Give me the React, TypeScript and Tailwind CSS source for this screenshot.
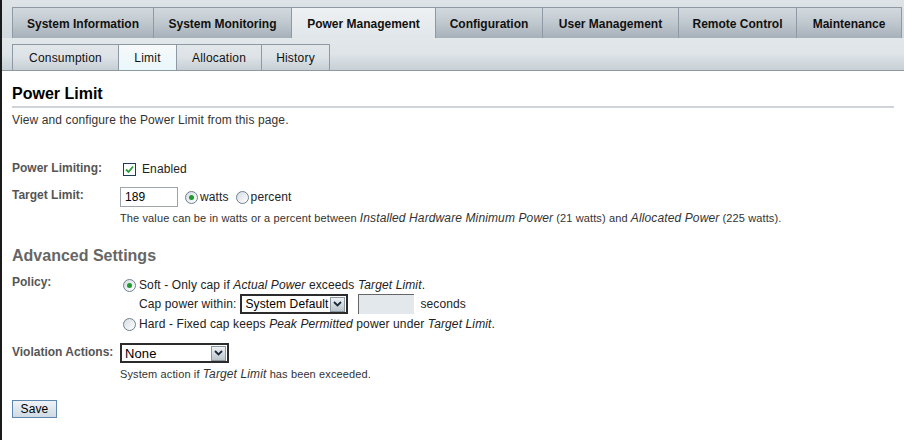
import React from "react";

const topTabs = [
  { label: "System Information", w: 142 },
  { label: "System Monitoring", w: 138 },
  { label: "Power Management", w: 144, active: true },
  { label: "Configuration", w: 107 },
  { label: "User Management", w: 136 },
  { label: "Remote Control", w: 118 },
  { label: "Maintenance", w: 105 },
];

const subTabs = [
  { label: "Consumption", w: 107 },
  { label: "Limit", w: 58, active: true },
  { label: "Allocation", w: 85 },
  { label: "History", w: 68 },
];

function Radio({ checked }: { checked?: boolean }) {
  return (
    <span className="relative inline-flex h-[13px] w-[13px] shrink-0 items-center justify-center rounded-full border border-[#6f7f8e] bg-linear-to-br from-[#d5dde4] to-white">
      {checked && <span className="h-[5px] w-[5px] rounded-full bg-[#1f9a2c]" />}
    </span>
  );
}

function Checkbox() {
  return (
    <span className="inline-flex h-[13px] w-[13px] shrink-0 items-center justify-center border border-[#1c3c5a] bg-white">
      <svg width="9" height="9" viewBox="0 0 9 9">
        <path d="M1 4.5 L3.5 7 L8 1.5" fill="none" stroke="#21a12f" strokeWidth="1.8" />
      </svg>
    </span>
  );
}

function SelectBox({ value, w, size }: { value: string; w: number; size: string }) {
  return (
    <span
      className={`inline-flex h-[20px] items-center justify-between whitespace-nowrap border-2 border-[#2b2b2b] bg-white pl-[3px] pr-[1px] text-black ${size}`}
      style={{ width: w }}
    >
      <span className="leading-none">{value}</span>
      <span className="inline-flex h-[15px] w-[15px] shrink-0 items-center justify-center border border-[#8a96a0] bg-linear-to-b from-[#eef1f3] to-[#bcc5cc]">
        <svg width="9" height="6" viewBox="0 0 9 6">
          <path d="M1 1 L4.5 4.5 L8 1" fill="none" stroke="#1a2a3a" strokeWidth="1.8" />
        </svg>
      </span>
    </span>
  );
}

export default function App() {
  return (
    <div
      className="relative h-[440px] w-[904px] overflow-hidden border-l-2 border-[#1a1a1a] bg-white text-[12px] tracking-[0.12px] text-[#333]"
      style={{ fontFamily: '"Liberation Sans", Arial, sans-serif' }}
    >
      {/* top tab bar */}
      <div className="flex h-[38px] items-end bg-linear-to-b from-[#dde3e7] to-[#d2d9de] pl-[10px]">
        {topTabs.map((t, i) => (
          <div
            key={t.label}
            className={`flex h-[31px] shrink-0 items-center justify-center border-t border-r border-[#8e99a3] pt-[1px] text-[12px] font-bold tracking-normal text-[#111] ${
              i === 0 ? "border-l" : ""
            } ${
              t.active
                ? "bg-linear-to-b from-[#eef1f3] to-[#e0e6ea]"
                : "bg-linear-to-b from-[#d2d9de] via-[#c0c8cf] to-[#a6b0b9]"
            }`}
            style={{ width: t.w }}
          >
            {t.label}
          </div>
        ))}
      </div>
      {/* sub tab bar */}
      <div className="flex h-[33px] items-end border-b border-[#8e99a3] bg-linear-to-b from-[#e2e7ea] via-[#dee4e8] to-[#c8d0d6] pl-[10px]">
        {subTabs.map((t, i) => (
          <div
            key={t.label}
            className={`flex h-[26px] shrink-0 items-center justify-center border-t border-r border-[#8e99a3] pt-[1px] text-[12px] tracking-[0.2px] text-[#111] ${
              i === 0 ? "border-l" : ""
            } ${
              t.active
                ? "bg-linear-to-b from-[#f7f9fa] to-[#e9f7fb]"
                : "bg-linear-to-b from-[#e2e7ea] via-[#dce2e6] to-[#c7cfd5]"
            }`}
            style={{ width: t.w }}
          >
            {t.label}
          </div>
        ))}
      </div>

      {/* content */}
      <div className="px-[10px]">
        <h1 className="mt-[14px] border-b-2 border-[#d0d4d8] pb-[3px] text-[16px] font-bold leading-[18px] tracking-normal text-black">
          Power Limit
        </h1>
        <p className="mt-[5px] leading-[14px] text-[#333]">View and configure the Power Limit from this page.</p>

        {/* Power Limiting */}
        <div className="mt-[31px] flex items-center">
          <div className="w-[108px] font-bold tracking-normal text-[#555]">Power Limiting:</div>
          <div className="ml-[3px] flex items-center gap-[6px] pt-[2px]">
            <Checkbox />
            <span className="text-[12px] text-[#222]">Enabled</span>
          </div>
        </div>

        {/* Target limit */}
        <div className="mt-[9px] flex items-start">
          <div className="-mt-[1px] w-[108px] font-bold tracking-normal text-[#555]">Target Limit:</div>
          <div>
            <div className="flex items-center">
              <span className="flex h-[20px] w-[58px] items-center border border-[#9ea4aa] bg-white pl-[4px] text-[12px] text-black">
                189
              </span>
              <span className="ml-[7px] flex items-center gap-[2px]">
                <Radio checked />
                <span className="text-[12px] text-[#222]">watts</span>
              </span>
              <span className="ml-[7px] flex items-center gap-[2px]">
                <Radio />
                <span className="text-[12px] text-[#222]">percent</span>
              </span>
            </div>
            <div className="mt-[4px] whitespace-nowrap text-[11px] leading-[14px] text-[#333]">
              The value can be in watts or a percent between <i className="text-[12px]">Installed Hardware Minimum Power</i> (21 watts) and{" "}
              <i className="text-[12px]">Allocated Power</i> (225 watts).
            </div>
          </div>
        </div>

        <h2 className="mt-[22px] text-[16px] font-bold leading-[18px] tracking-normal text-[#666]">Advanced Settings</h2>

        {/* Policy */}
        <div className="mt-[8px] flex items-start">
          <div className="w-[108px] font-bold tracking-normal text-[#555]">Policy:</div>
          <div className="ml-[3px] pt-[3px]">
            <div className="flex items-center gap-[3px]">
              <Radio checked />
              <span className="text-[#222]">
                Soft - Only cap if <i>Actual Power</i> exceeds <i>Target Limit</i>.
              </span>
            </div>
            <div className="ml-[16px] mt-0 flex items-center">
              <span className="mr-[4px] text-[#222]">Cap power within:</span>
              <SelectBox value="System Default" w={108} size="text-[12px]" />
              <span className="ml-[10px] h-[20px] w-[56px] border-l border-t border-[#666] bg-[#e3e8ec]" />
              <span className="ml-[6px] text-[#222]">seconds</span>
            </div>
            <div className="mt-[1px] flex items-center gap-[3px]">
              <Radio />
              <span className="text-[#222]">
                Hard - Fixed cap keeps <i>Peak Permitted</i> power under <i>Target Limit</i>.
              </span>
            </div>
          </div>
        </div>

        {/* Violation */}
        <div className="mt-[10px] flex items-start">
          <div className="w-[108px] font-bold tracking-normal text-[#555]">Violation Actions:</div>
          <div>
            <SelectBox value="None" w={109} size="text-[13px]" />
            <div className="mt-[4px] text-[11px] leading-[14px] text-[#333]">
              System action if <i className="text-[12px]">Target Limit</i> has been exceeded.
            </div>
          </div>
        </div>

        <button className="mt-[19px] flex h-[18px] w-[45px] items-center justify-center border border-[#5d86b0] bg-linear-to-b from-[#eef3f7] to-[#cfdae3] text-[12px] text-black">
          Save
        </button>
      </div>
    </div>
  );
}
